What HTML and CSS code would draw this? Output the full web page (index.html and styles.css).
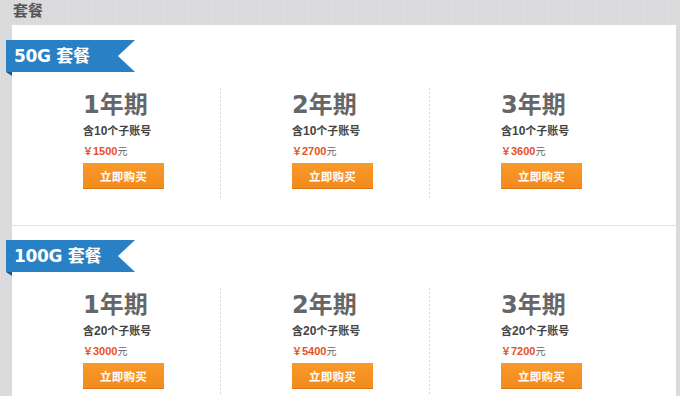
FILE: index.html
```html
<!DOCTYPE html>
<html lang="zh-CN">
<head>
<meta charset="utf-8">
<title>套餐</title>
<link rel="stylesheet" href="styles.css">
</head>
<body>
<div class="page-title">套餐</div>
<div class="panel">
  <section class="pkg">
    <div class="ribbon-wrap"><div class="ribbon">50G 套餐</div></div>
    <div class="plans">
      <div class="plan">
        <div class="term"><b class="num">1</b>年期</div>
        <div class="desc">含<b class="n">10</b>个子账号</div>
        <div class="price"><span class="yen">￥</span><b class="n">1500</b><span class="unit">元</span></div>
        <a class="buy">立即购买</a>
      </div>
      <div class="plan">
        <div class="term"><b class="num">2</b>年期</div>
        <div class="desc">含<b class="n">10</b>个子账号</div>
        <div class="price"><span class="yen">￥</span><b class="n">2700</b><span class="unit">元</span></div>
        <a class="buy">立即购买</a>
      </div>
      <div class="plan last">
        <div class="term"><b class="num">3</b>年期</div>
        <div class="desc">含<b class="n">10</b>个子账号</div>
        <div class="price"><span class="yen">￥</span><b class="n">3600</b><span class="unit">元</span></div>
        <a class="buy">立即购买</a>
      </div>
    </div>
  </section>
  <section class="pkg">
    <div class="ribbon-wrap"><div class="ribbon">100G 套餐</div></div>
    <div class="plans">
      <div class="plan">
        <div class="term"><b class="num">1</b>年期</div>
        <div class="desc">含<b class="n">20</b>个子账号</div>
        <div class="price"><span class="yen">￥</span><b class="n">3000</b><span class="unit">元</span></div>
        <a class="buy">立即购买</a>
      </div>
      <div class="plan">
        <div class="term"><b class="num">2</b>年期</div>
        <div class="desc">含<b class="n">20</b>个子账号</div>
        <div class="price"><span class="yen">￥</span><b class="n">5400</b><span class="unit">元</span></div>
        <a class="buy">立即购买</a>
      </div>
      <div class="plan last">
        <div class="term"><b class="num">3</b>年期</div>
        <div class="desc">含<b class="n">20</b>个子账号</div>
        <div class="price"><span class="yen">￥</span><b class="n">7200</b><span class="unit">元</span></div>
        <a class="buy">立即购买</a>
      </div>
    </div>
  </section>
</div>
</body>
</html>
```

FILE: styles.css
```css
html, body {
  margin: 0;
  padding: 0;
}
body {
  background-color: #dcdcdf;
  background-image: repeating-linear-gradient(90deg, rgba(255,255,255,0.05) 0 1px, rgba(0,0,0,0.01) 1px 3px);
  font-family: "Noto Sans CJK SC", sans-serif;
  color: #333;
}
.page-title {
  height: 25px;
  box-sizing: border-box;
  padding: 0 0 0 13px;
  line-height: 19px;
  font-size: 15px;
  font-weight: bold;
  color: #555;
}
.panel {
  margin-left: 12px;
  width: 664px;
  background: #fff;
  border-right: 1px solid #dadada;
  padding-top: 1px;
}
.pkg {
  padding: 14px 0 27px;
  border-bottom: 1px solid #e2e2e2;
}
.ribbon-wrap {
  position: relative;
  margin-left: -6px;
  width: 129px;
  height: 32px;
}
.ribbon-wrap::after {
  content: "";
  position: absolute;
  left: 0;
  top: 32px;
  border-style: solid;
  border-width: 0 6px 4px 0;
  border-color: transparent #17598e transparent transparent;
}
.ribbon {
  height: 32px;
  padding-left: 8px;
  line-height: 32px;
  background: #2a80c4;
  color: #fff;
  font-family: "DejaVu Sans", "Noto Sans CJK SC", sans-serif;
  font-size: 17px;
  font-weight: bold;
  letter-spacing: -0.3px;
  clip-path: polygon(0 0, 100% 0, calc(100% - 17px) 50%, 100% 100%, 0 100%);
}
.plans {
  display: flex;
  margin-top: 16px;
}
.plan {
  width: 209px;
  box-sizing: border-box;
  padding: 0 0 9px 71px;
  background-image: linear-gradient(#d8d8d8 50%, transparent 50%);
  background-size: 1px 4px;
  background-repeat: repeat-y;
  background-position: right top;
  display: flex;
  flex-direction: column;
  align-items: flex-start;
}
.plan.last {
  background-image: none;
}
.term {
  height: 30px;
  line-height: 30px;
  font-size: 24px;
  font-weight: bold;
  color: #666;
}
.num {
  font-family: "DejaVu Sans", sans-serif;
}
.desc {
  margin-top: 4px;
  height: 16px;
  line-height: 16px;
  font-size: 11px;
  font-weight: bold;
  color: #444;
}
.n {
  font-family: "Liberation Sans", Arial, sans-serif;
}
.desc .n {
  font-size: 12px;
}
.price {
  margin-top: 4px;
  height: 16px;
  line-height: 16px;
  font-size: 11px;
  color: #e8501d;
  font-weight: bold;
}
.yen {
  font-size: 10px;
}
.unit {
  font-size: 10px;
  font-weight: normal;
  color: #666;
}
.buy {
  display: block;
  margin-top: 5px;
  width: 81px;
  height: 26px;
  line-height: 26px;
  box-sizing: border-box;
  text-align: center;
  background: linear-gradient(#f89a2a, #f28a1c);
  border-bottom: 1px solid #e0781a;
  color: #fff;
  font-size: 11.5px;
  font-weight: bold;
  letter-spacing: 0.2px;
}
```
